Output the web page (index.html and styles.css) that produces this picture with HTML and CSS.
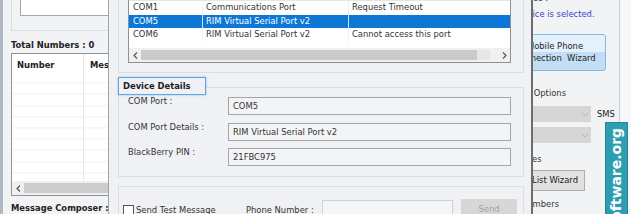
FILE: index.html
```html
<!DOCTYPE html>
<html>
<head>
<meta charset="utf-8">
<link rel="stylesheet" href="styles.css">
</head>
<body>
<div class="app">
  <div class="lframe"></div>
  <div class="left">
    <div class="topgroup"><div class="topbox"></div></div>
    <div class="total">Total Numbers : 0</div>
    <div class="grid">
      <div class="grid-head">
        <div class="gh gc1">Number</div>
        <div class="gh gc2">Message</div>
      </div>
      <div class="grid-body">
        <div class="gcol gc1"></div>
        <div class="gcol gc2"></div>
      </div>
      <div class="hscroll">
        <div class="sarrow"><svg width="5" height="7" viewBox="0 0 5 7"><polyline points="4,0.5 1,3.5 4,6.5" fill="none" stroke="#555" stroke-width="1.2"/></svg></div>
        <div class="gthumb"></div>
      </div>
    </div>
    <div class="composer">Message Composer :</div>
  </div>
  <div class="right">
    <div class="dev-label">Device :</div>
    <div class="dev-status">No device is selected.</div>
    <div class="wiz-btn">Mobile Phone<br>Connection&nbsp; Wizard</div>
    <div class="opt-label">Sending Options</div>
    <div class="combo-row">
      <div class="combo"><svg width="8" height="5" viewBox="0 0 8 5"><polyline points="0.5,0.5 4,4 7.5,0.5" fill="none" stroke="#b4b4b4" stroke-width="1"/></svg></div>
      <div class="sms">SMS</div>
    </div>
    <div class="combo-row second">
      <div class="combo"><svg width="8" height="5" viewBox="0 0 8 5"><polyline points="0.5,0.5 4,4 7.5,0.5" fill="none" stroke="#b4b4b4" stroke-width="1"/></svg></div>
    </div>
    <div class="types-label">Types</div>
    <div class="list-btn">Contact List Wizard</div>
    <div class="num-label">Numbers</div>
  </div>
  <div class="edge"></div>
</div>

<div class="dialog">
  <div class="group g1">
    <div class="listview">
      <div class="lv-head">
        <div class="lc c1"></div>
        <div class="lc c2"></div>
        <div class="lc c3"></div>
      </div>
      <div class="lv-rows">
        <div class="lv-row">
          <div class="lc c1">COM1</div>
          <div class="lc c2">Communications Port</div>
          <div class="lc c3">Request Timeout</div>
        </div>
        <div class="lv-row sel">
          <div class="lc c1">COM5</div>
          <div class="lc c2">RIM Virtual Serial Port v2</div>
          <div class="lc c3"></div>
        </div>
        <div class="lv-row">
          <div class="lc c1">COM6</div>
          <div class="lc c2">RIM Virtual Serial Port v2</div>
          <div class="lc c3">Cannot access this port</div>
        </div>
      </div>
      <div class="lv-scroll">
        <div class="sarrow"><svg width="5" height="7" viewBox="0 0 5 7"><polyline points="4,0.5 1,3.5 4,6.5" fill="none" stroke="#555" stroke-width="1.2"/></svg></div>
        <div class="lthumb"></div>
        <div class="strack"></div>
        <div class="sarrow"><svg width="5" height="7" viewBox="0 0 5 7"><polyline points="1,0.5 4,3.5 1,6.5" fill="none" stroke="#555" stroke-width="1.2"/></svg></div>
      </div>
    </div>
  </div>

  <div class="group g2">
    <div class="legend">Device Details</div>
    <div class="fields">
      <div class="field"><div class="flabel">COM Port :</div><div class="fbox">COM5</div></div>
      <div class="field"><div class="flabel">COM Port Details :</div><div class="fbox">RIM Virtual Serial Port v2</div></div>
      <div class="field"><div class="flabel">BlackBerry PIN :</div><div class="fbox">21FBC975</div></div>
    </div>
  </div>

  <div class="group g3">
    <div class="test-row">
      <div class="chk-wrap"><span class="chk"></span><span>Send Test Message</span></div>
      <div class="phone-label">Phone Number :</div>
      <div class="phone-box"></div>
      <div class="send-btn">Send</div>
    </div>
  </div>
</div>

<div class="badge"><span>Software.org</span></div>
</body>
</html>
```

FILE: styles.css
```css
* { box-sizing: border-box; }

body {
  margin: 0;
  width: 631px;
  height: 214px;
  overflow: hidden;
  position: relative;
  font-family: "DejaVu Sans", Verdana, sans-serif;
  font-size: 8.4px;
  color: #333;
  background: #f2f3f5;
}

.app {
  display: flex;
  height: 214px;
}

.lframe {
  width: 3px;
  background: #aeb7c2;
}

.left {
  width: 487px;
  padding-left: 8px;
  display: flex;
  flex-direction: column;
}

.topgroup {
  height: 31px;
  border: 1px solid #d9dce0;
  border-top: none;
  padding-left: 8px;
}

.topbox {
  height: 16px;
  background: #fff;
  border: 1px solid #a7a7a7;
  border-top: none;
}

.total, .composer {
  font-weight: bold;
  color: #222;
  line-height: 12px;
}

.total { margin-top: 8px; }

.grid {
  margin-top: 2px;
  height: 144px;
  border: 1px solid #8f949a;
  background: #fff;
  display: flex;
  flex-direction: column;
}

.grid-head {
  height: 22px;
  display: flex;
}

.gh {
  font-weight: bold;
  color: #222;
  line-height: 22px;
}

.gc1 {
  width: 72px;
  padding-left: 5px;
  border-right: 1px solid #e6e6e6;
}

.gc2 {
  flex: 1;
  padding-left: 6px;
}

.grid-body {
  flex: 1;
  display: flex;
  background: repeating-linear-gradient(to bottom, transparent 0 10.2px, #efefef 10.2px 11.2px);
  background-position: 0 -3.6px;
}

.hscroll, .lv-scroll {
  height: 14px;
  display: flex;
  align-items: stretch;
  background: #f0f0f0;
}

.sarrow {
  width: 12px;
  display: flex;
  align-items: center;
  justify-content: center;
}

.gthumb {
  flex: 1;
  margin: 2px 0;
  background: #cdcdcd;
}

.composer { margin-top: 6px; }

/* right column of the background window */
.right {
  width: 130px;
  border-right: 1px solid #c9cdd2;
  display: flex;
  flex-direction: column;
  align-items: flex-start;
  line-height: 12px;
}

.dev-label { margin: -8px 0 0 24px; }

.dev-status {
  margin: 4px 0 0 13px;
  color: #3d3fc4;
}

.wiz-btn {
  margin: 14px 0 0 14px;
  width: 102px;
  height: 37px;
  border: 1px solid #84b6e6;
  border-radius: 3px;
  background: linear-gradient(to bottom, #e4f0fb 0 48%, #c2def6 48% 100%);
  text-align: center;
  line-height: 11.5px;
  padding-top: 6px;
  color: #222;
}

.opt-label { margin: 16px 0 0 7px; }

.combo-row {
  margin-top: 7px;
  display: flex;
  align-items: center;
}

.combo-row.second { margin-top: 5px; }

.combo {
  width: 101px;
  height: 16px;
  background: #d6d6d6;
  display: flex;
  align-items: center;
  justify-content: flex-end;
  padding-right: 2px;
}

.sms {
  margin-left: 6px;
  color: #222;
}

.types-label { margin: 10px 0 0 28px; }

.list-btn {
  margin-top: 5px;
  width: 95px;
  height: 21px;
  border: 1px solid #adadad;
  background: #e1e1e1;
  text-align: right;
  padding-right: 6px;
  line-height: 19px;
  color: #222;
}

.num-label { margin: 7px 0 0 31px; }

.edge {
  flex: 1;
  background: #f7f8fa;
}

/* dialog */
.dialog {
  position: absolute;
  left: 108px;
  top: -40px;
  width: 425px;
  height: 270px;
  background: #eff1f4;
  border-left: 1px solid #a0a4a9;
  border-right: 2px solid #6d6d6d;
  padding: 8px 0 0 9px;
}

.group {
  width: 406px;
  border: 1px solid #dadde2;
}

.g1 {
  padding: 8px 0 9px 9px;
}

.listview {
  width: 383px;
  height: 86px;
  border: 1px solid #8e9297;
  background: #fff;
  display: flex;
  flex-direction: column;
}

.lv-head {
  height: 23px;
  display: flex;
  border-bottom: 1px solid #e5e5e5;
}

.lv-rows {
  flex: 1;
}

.lv-row {
  height: 13.5px;
  display: flex;
  line-height: 13.5px;
  color: #333;
}

.lv-row.sel {
  background: #0c77d4;
  color: #fff;
}

.lc {
  padding-left: 4px;
  white-space: nowrap;
  overflow: hidden;
}

.c1 { width: 73px; }
.c2 { width: 146px; border-left: 1px solid #f1f1f1; padding-left: 3px; }
.c3 { flex: 1; border-left: 1px solid #f1f1f1; padding-left: 3px; }

.lv-row.sel .c2, .lv-row.sel .c3 { border-left-color: #d0e4f6; }

.lthumb {
  width: 336px;
  margin: 2px 0;
  background: #cacaca;
}

.strack {
  flex: 1;
  margin: 2px 8px 2px 0;
  background: #e6e6e6;
}

.g2 {
  margin-top: 14px;
  padding-bottom: 10px;
}

.legend {
  margin: -11px 0 0 -1px;
  width: 88px;
  height: 18px;
  border: 1px solid #5aa7e2;
  box-shadow: 0 0 2px rgba(70, 150, 225, 0.55);
  background: #eff1f4;
  font-weight: bold;
  color: #1d1d1d;
  line-height: 16px;
  padding-left: 4px;
}

.fields {
  margin-top: 2px;
  padding-left: 9px;
  display: flex;
  flex-direction: column;
  gap: 7.5px;
}

.field {
  display: flex;
  align-items: flex-start;
}

.flabel {
  width: 100px;
  line-height: 12px;
  margin-top: -2px;
}

.fbox {
  width: 283px;
  height: 18px;
  border: 1px solid #a3a6aa;
  background: #f3f4f5;
  padding-left: 4px;
  line-height: 16px;
}

.g3 {
  margin-top: 9px;
  height: 60px;
  padding: 12px 0 0 4px;
}

.test-row {
  display: flex;
  align-items: center;
}

.chk-wrap {
  width: 123px;
  display: flex;
  align-items: center;
  gap: 2px;
}

.chk {
  width: 11px;
  height: 11px;
  border: 1px solid #555;
  background: #fff;
}

.phone-label { width: 76px; }

.phone-box {
  width: 131px;
  height: 20px;
  border: 1px solid #cfd1d4;
  background: #f4f5f6;
}

.send-btn {
  margin-left: 8px;
  width: 56px;
  height: 22px;
  background: #d7d7d7;
  color: #a3a3a3;
  text-align: center;
  line-height: 20px;
}

/* watermark */
.badge {
  position: absolute;
  left: 605px;
  top: 122px;
  width: 23px;
  height: 110px;
  background: #2e9db2;
  border: 1px solid #23869a;
  writing-mode: vertical-rl;
  transform: rotate(180deg);
  text-align: end;
  padding-bottom: 8px;
  color: #fff;
  font-weight: bold;
  font-size: 14px;
  line-height: 21px;
  white-space: nowrap;
  overflow: hidden;
}
```
